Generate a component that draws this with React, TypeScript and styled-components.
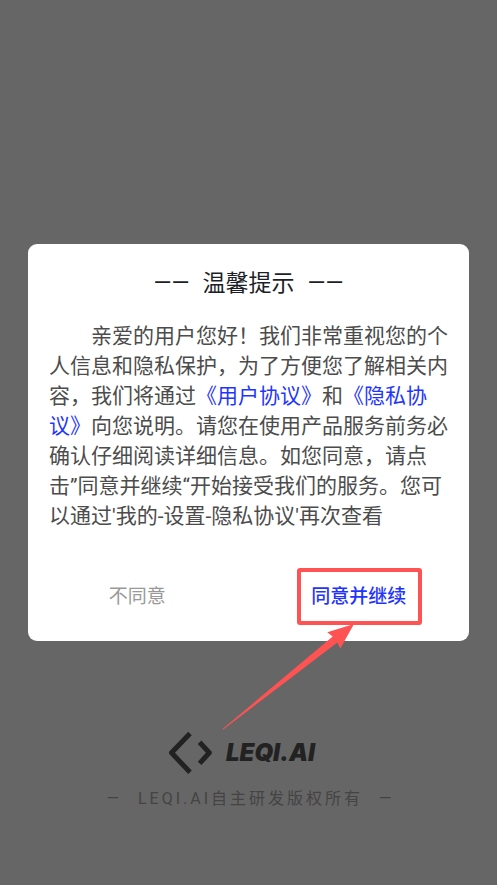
import React from 'react';
import styled, { createGlobalStyle } from 'styled-components';

const GlobalStyle = createGlobalStyle`
  *, *::before, *::after { box-sizing: border-box; }
  body {
    margin: 0;
    background: #fff;
    font-family: Roboto, "Noto Sans CJK SC", sans-serif;
  }
`;

const Splash = styled.main`
  display: flex;
  flex-direction: column;
  justify-content: flex-end;
  align-items: center;
  gap: 12px;
  min-height: 100vh;
  padding-bottom: 74px;
`;

const Brand = styled.div`
  display: flex;
  align-items: center;
  gap: 14px;
  padding-right: 14px;
  color: #555;
`;

const BrandName = styled.span`
  font: italic 900 24px/28px Inter, sans-serif;
`;

const Copyright = styled.p`
  display: flex;
  gap: 16px;
  margin: 0;
  padding-left: 4px;
  color: #aaa;
  font-size: 16px;
  line-height: 24px;
  letter-spacing: 3px;
`;

const Overlay = styled.div`
  position: fixed;
  inset: 0;
  display: flex;
  align-items: center;
  padding: 0 28px;
  background: rgba(0, 0, 0, 0.6);
`;

const Dialog = styled.section`
  flex: 1;
  padding: 24px 0 16px;
  border-radius: 9px;
  background: #fff;
`;

const Title = styled.h1`
  display: flex;
  justify-content: center;
  gap: 13px;
  margin: 0 0 21px;
  color: #1c1f27;
  font-size: 23px;
  font-weight: 400;
  line-height: 32px;
`;

const Message = styled.p`
  margin: 0 21px 37px;
  color: #4c4c4c;
  font-size: 21px;
  line-height: 30px;
  text-indent: 2em;
`;

const PolicyLink = styled.a`
  color: #1f35ff;
  text-decoration: none;
`;

const Actions = styled.div`
  display: grid;
  grid-template-columns: 1fr 1fr;
  column-gap: 4px;
  align-items: center;
  justify-items: center;
`;

const ActionButton = styled.button<{ $primary?: boolean }>`
  padding: 1px 9px 0;
  border: 0;
  background: none;
  color: ${({ $primary }) => ($primary ? '#1f35ff' : '#999')};
  font-family: inherit;
  font-size: 19px;
  font-weight: ${({ $primary }) => ($primary ? 500 : 400)};
  line-height: 48px;
  cursor: pointer;
`;

const Highlight = styled.div`
  position: relative;
  padding: 0 3px 0 1px;
  border: 4px solid #ff5252;
  border-radius: 3px;
`;

const Arrow = styled.svg`
  position: absolute;
  top: 100%;
  right: 64px;
  margin-top: 3px;
  pointer-events: none;
`;

export default function App() {
  return (
    <>
      <GlobalStyle />
      <Splash>
        <Brand>
          <svg width="44" height="44" viewBox="0 0 44 44" fill="none" stroke="currentColor" strokeWidth="5" strokeLinejoin="round" aria-hidden="true">
            <path d="M22 2.5 3.5 21.8 22 41.2" />
            <path d="M31.6 11.2 41.3 21.8 31.6 32.4" />
          </svg>
          <BrandName>LEQI.AI</BrandName>
        </Brand>
        <Copyright>
          <span>—</span>
          <span>LEQI.AI自主研发版权所有</span>
          <span>—</span>
        </Copyright>
      </Splash>
      <Overlay>
        <Dialog role="dialog" aria-modal="true" aria-labelledby="notice-title">
          <Title id="notice-title">
            <span>——</span>
            <span>温馨提示</span>
            <span>——</span>
          </Title>
          <Message>
            亲爱的用户您好！我们非常重视您的个人信息和隐私保护，为了方便您了解相关内容，我们将通过
            <PolicyLink href="#user-agreement">《用户协议》</PolicyLink>和
            <PolicyLink href="#privacy-agreement">《隐私协议》</PolicyLink>
            向您说明。请您在使用产品服务前务必确认仔细阅读详细信息。如您同意，请点击”同意并继续“开始接受我们的服务。您可以通过'我的-设置-隐私协议'再次查看
          </Message>
          <Actions>
            <ActionButton type="button">不同意</ActionButton>
            <Highlight>
              <ActionButton type="button" $primary>同意并继续</ActionButton>
              <Arrow width="132" height="106" viewBox="0 0 132 106" fill="#ff5252" aria-hidden="true">
                <path d="M132 0 105.3 8.2 110.7 12.5 0.5 105 1.2 105.6 115.3 18.6 118.3 24.6Z" />
              </Arrow>
            </Highlight>
          </Actions>
        </Dialog>
      </Overlay>
    </>
  );
}
